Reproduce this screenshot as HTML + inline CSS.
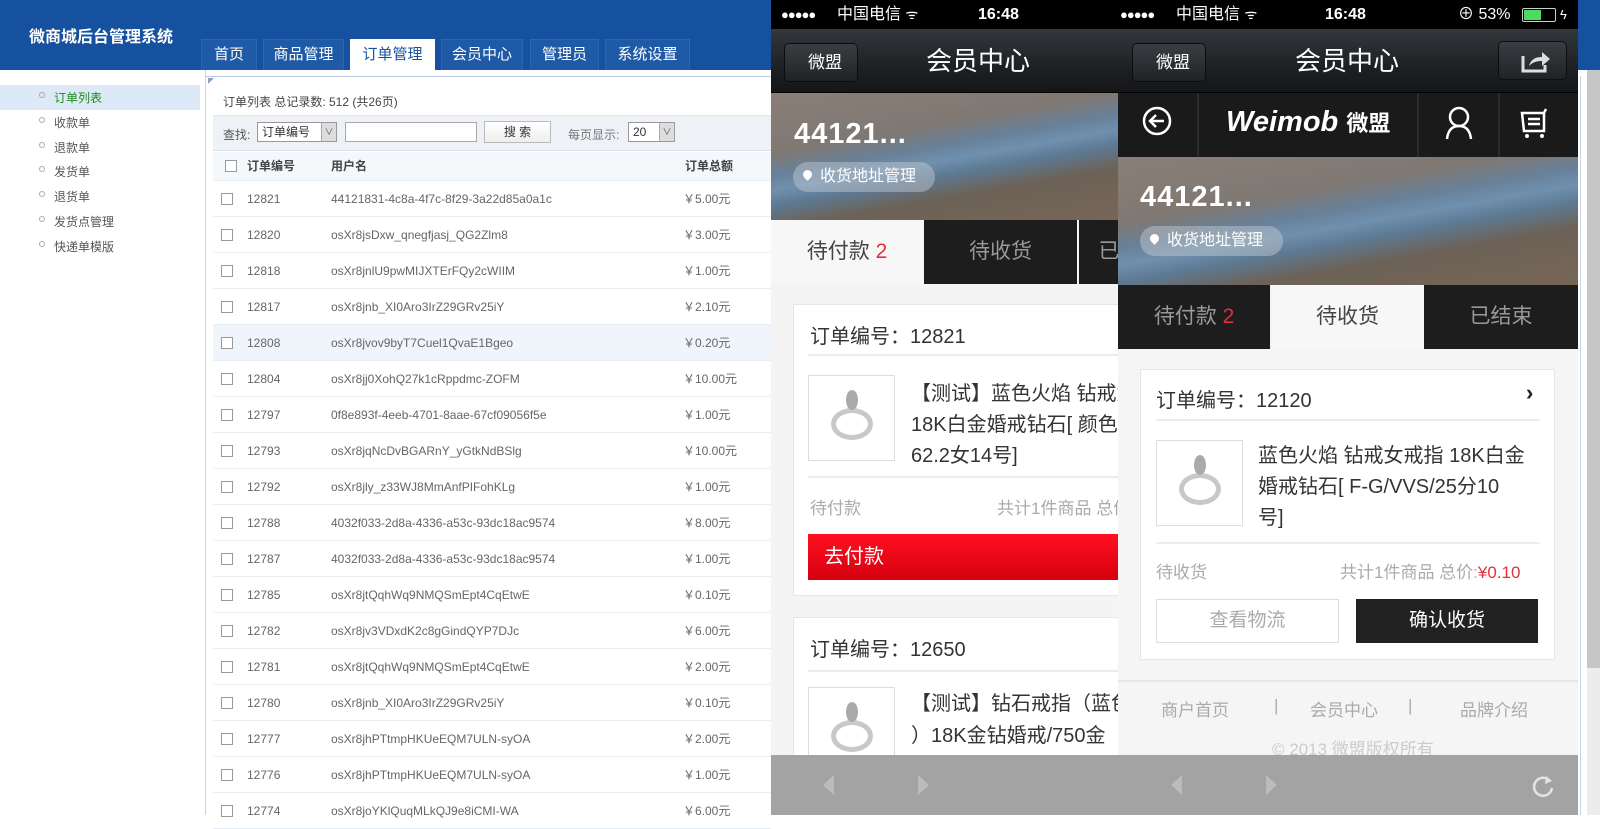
<!DOCTYPE html>
<html><head><meta charset="utf-8"><style>
*{margin:0;padding:0;box-sizing:border-box}
body{width:1600px;height:815px;overflow:hidden;position:relative;background:#fff;font-family:"Liberation Sans","Noto Sans CJK SC",sans-serif;color:#333}
.a{position:absolute;white-space:nowrap}
.tab{position:absolute;top:39px;height:31px;background:#1f5aa6;border:1px solid #2c66b3;border-bottom:none;color:#fff;font-size:15px;line-height:30px;text-align:center}
.side{position:absolute;left:54px;font-size:12px;color:#555}
.dot{position:absolute;left:39px;width:6px;height:6px;border:1px solid #aaa;border-radius:50%}
.row{position:absolute;left:213px;width:558px;height:36px;border-bottom:1px solid #e6edf5;font-size:12px;color:#666;line-height:36px}
.cb{position:absolute;left:8px;top:12px;width:12px;height:12px;border:1px solid #999;background:#fff}
.sb{position:absolute;top:0;height:29px;background:#000;color:#fff;font-size:16px;line-height:29px}
.nav{position:absolute;top:29px;height:64px;background:linear-gradient(#33383c,#1e2124 60%,#141618);border-bottom:1px solid #000}
.back{position:absolute;top:14px;height:39px;width:74px;border:1px solid #0c0d0e;border-radius:5px;background:linear-gradient(#3a3e42,#202326);color:#fff;font-size:17px;line-height:37px;text-align:center;padding-left:8px}
.ttl{position:absolute;top:0;line-height:64px;color:#fff;font-size:26px}
.photo{position:absolute;background:linear-gradient(170deg,#8a7f78 0%,#7f7872 32%,#68819a 44%,#6f90ae 52%,#5d7a93 60%,#6c6257 72%,#776656 100%)}
.nick{position:absolute;color:#fff;font-size:29px;font-weight:bold;letter-spacing:1px}
.pill{position:absolute;height:30px;border-radius:15px;background:rgba(200,205,210,.45);color:#fff;font-size:16px;line-height:30px;padding-left:27px}
.pill:before{content:"";position:absolute;left:10px;top:8px;width:9px;height:9px;border-radius:50% 50% 50% 0;transform:rotate(-45deg);background:#fff}
.ptab{position:absolute;height:64px;font-size:21px;line-height:64px;text-align:center}
.dk{background:#1d1d1d;color:#999}
.card{position:absolute;background:#fff;border:1px solid #e6e6e6}
.big{position:absolute;font-size:20px;color:#333;white-space:nowrap}
.line{position:absolute;height:2px;background:#ececec}
.img{position:absolute;width:87px;height:86px;border:1px solid #ddd;background:#fff}
.ring{position:absolute;left:22px;top:32px;width:42px;height:32px;border:5px solid #c8c8c8;border-radius:50%}
.gem{position:absolute;left:37px;top:14px;width:12px;height:20px;background:#aaa;border-radius:50%}
.gray{position:absolute;font-size:17px;color:#aaa;white-space:nowrap}
</style></head><body>
<div class="a" style="left:0;top:0;width:1600px;height:70px;background:#15519f"></div>
<div class="a" style="left:29px;top:23px;color:#fff;font-size:16px;font-weight:bold">微商城后台管理系统</div>
<div class="tab" style="left:201px;width:56px">首页</div>
<div class="tab" style="left:263px;width:81px">商品管理</div>
<div class="tab" style="left:350px;width:85px;background:#fff;color:#15519f;border-color:#fff">订单管理</div>
<div class="tab" style="left:441px;width:82px">会员中心</div>
<div class="tab" style="left:530px;width:69px">管理员</div>
<div class="tab" style="left:605px;width:85px">系统设置</div>
<div class="a" style="left:0;top:85px;width:200px;height:25px;background:#dde9f7"></div>
<div class="a" style="left:205px;top:70px;width:1px;height:745px;background:#c8d3e0"></div>
<div class="dot" style="top:92px"></div><div class="side" style="top:89px;color:#1f8a1f">订单列表</div>
<div class="dot" style="top:117px"></div><div class="side" style="top:114px">收款单</div>
<div class="dot" style="top:142px"></div><div class="side" style="top:139px">退款单</div>
<div class="dot" style="top:166px"></div><div class="side" style="top:163px">发货单</div>
<div class="dot" style="top:191px"></div><div class="side" style="top:188px">退货单</div>
<div class="dot" style="top:216px"></div><div class="side" style="top:213px">发货点管理</div>
<div class="dot" style="top:241px"></div><div class="side" style="top:238px">快递单模版</div>
<div class="a" style="left:206px;top:76px;width:600px;height:1px;background:#b9c7d8"></div>
<div class="a" style="left:208px;top:78px;border-left:6px solid #8aa2c0;border-bottom:6px solid transparent"></div>
<div class="a" style="left:223px;top:93px;font-size:12px;color:#444">订单列表 总记录数: 512 (共26页)</div>
<div class="a" style="left:213px;top:115px;width:558px;height:36px;background:#eef2f7;border-top:1px solid #dde4ee;border-bottom:1px solid #dde4ee"></div>
<div class="a" style="left:223px;top:126px;font-size:12px;color:#555">查找:</div>
<div class="a" style="left:257px;top:122px;width:80px;height:20px;border:1px solid #999;background:#fff;font-size:12px;line-height:18px;padding-left:4px">订单编号</div>
<div class="a" style="left:321px;top:123px;width:15px;height:18px;background:#ddd;border-left:1px solid #aaa;font-size:9px;text-align:center;line-height:18px;color:#555">∨</div>
<div class="a" style="left:345px;top:122px;width:132px;height:20px;border:1px solid #aaa;background:#fff"></div>
<div class="a" style="left:484px;top:121px;width:67px;height:22px;border:1px solid #bbb;background:linear-gradient(#fff,#eee);font-size:12px;text-align:center;line-height:20px">搜 索</div>
<div class="a" style="left:568px;top:126px;font-size:12px;color:#777">每页显示:</div>
<div class="a" style="left:628px;top:122px;width:47px;height:20px;border:1px solid #999;background:#fff;font-size:12px;line-height:18px;padding-left:4px">20</div>
<div class="a" style="left:659px;top:123px;width:15px;height:18px;background:#ddd;border-left:1px solid #aaa;font-size:9px;text-align:center;line-height:18px;color:#555">∨</div>
<div class="row" style="top:152px;height:29px;line-height:29px;font-weight:bold;color:#444;background:#f5f8fb"><div class="cb" style="top:8px;left:12px"></div><span class="a" style="left:34px">订单编号</span><span class="a" style="left:118px">用户名</span><span class="a" style="left:472px">订单总额</span></div>
<div id="rows"></div>
<script>
var d=[["12821","44121831-4c8a-4f7c-8f29-3a22d85a0a1c","5.00"],["12820","osXr8jsDxw_qnegfjasj_QG2Zlm8","3.00"],["12818","osXr8jnlU9pwMIJXTErFQy2cWIIM","1.00"],["12817","osXr8jnb_XI0Aro3IrZ29GRv25iY","2.10"],["12808","osXr8jvov9byT7Cuel1QvaE1Bgeo","0.20"],["12804","osXr8jj0XohQ27k1cRppdmc-ZOFM","10.00"],["12797","0f8e893f-4eeb-4701-8aae-67cf09056f5e","1.00"],["12793","osXr8jqNcDvBGARnY_yGtkNdBSlg","10.00"],["12792","osXr8jly_z33WJ8MmAnfPIFohKLg","1.00"],["12788","4032f033-2d8a-4336-a53c-93dc18ac9574","8.00"],["12787","4032f033-2d8a-4336-a53c-93dc18ac9574","1.00"],["12785","osXr8jtQqhWq9NMQSmEpt4CqEtwE","0.10"],["12782","osXr8jv3VDxdK2c8gGindQYP7DJc","6.00"],["12781","osXr8jtQqhWq9NMQSmEpt4CqEtwE","2.00"],["12780","osXr8jnb_XI0Aro3IrZ29GRv25iY","0.10"],["12777","osXr8jhPTtmpHKUeEQM7ULN-syOA","2.00"],["12776","osXr8jhPTtmpHKUeEQM7ULN-syOA","1.00"],["12774","osXr8joYKlQuqMLkQJ9e8iCMI-WA","6.00"]];
var h="";for(var i=0;i<d.length;i++){h+='<div class="row" style="top:'+(181+36*i)+'px;'+(i==4?'background:#f0f5fb':'')+'"><div class="cb"></div><span class="a" style="left:34px">'+d[i][0]+'</span><span class="a" style="left:118px">'+d[i][1]+'</span><span class="a" style="left:470px">￥'+d[i][2]+'元</span></div>'}
document.getElementById("rows").innerHTML=h;
</script>
<div class="a" style="left:1580px;top:76px;width:1px;height:739px;background:#c8d3e0"></div>
<div class="a" style="left:1587px;top:70px;width:13px;height:598px;background:#c6c6c6"></div>
<div class="a" style="left:1587px;top:668px;width:13px;height:147px;background:#ececec"></div>

<div class="a" style="left:771px;top:0;width:347px;height:815px;background:#f4f4f4;overflow:hidden">
 <div class="sb" style="left:0;width:347px"><span class="a" style="left:10px;font-size:13px;letter-spacing:-1px">●●●●●</span><span class="a" style="left:66px">中国电信 <span style="font-size:14px">ᯤ</span></span><span class="a" style="left:207px;font-weight:bold">16:48</span></div>
 <div class="nav" style="left:0;width:347px"><div class="back" style="left:13px">微盟</div><div class="ttl" style="left:155px">会员中心</div></div>
 <div class="photo" style="left:0;top:93px;width:347px;height:127px"></div>
 <div class="nick" style="left:23px;top:118px">44121...</div>
 <div class="pill" style="left:22px;top:162px;width:142px">收货地址管理</div>
 <div class="ptab" style="left:0;top:220px;width:152px;background:#f7f7f7;color:#444">待付款 <span style="color:#e0303a">2</span></div>
 <div class="ptab dk" style="left:153px;top:220px;width:153px">待收货</div>
 <div class="ptab dk" style="left:308px;top:220px;width:60px">已</div>
 <div class="card" style="left:22px;top:304px;width:340px;height:292px"></div>
 <div class="big" style="left:39px;top:320px">订单编号：12821</div>
 <div class="line" style="left:37px;top:354px;width:320px"></div>
 <div class="img" style="left:37px;top:375px"><div class="ring"></div><div class="gem"></div></div>
 <div class="big" style="left:140px;top:379px;line-height:31px">【测试】蓝色火焰 钻戒女戒指<br>18K白金婚戒钻石[ 颜色<br>62.2女14号]</div>
 <div class="line" style="left:37px;top:476px;width:320px"></div>
 <div class="gray" style="left:39px;top:494px">待付款</div>
 <div class="gray" style="left:226px;top:494px">共计1件商品 总价</div>
 <div class="a" style="left:37px;top:534px;width:320px;height:46px;background:linear-gradient(#ff1020,#d50010);color:#fff;font-size:20px;line-height:46px;padding-left:16px">去付款</div>
 <div class="card" style="left:22px;top:617px;width:340px;height:200px"></div>
 <div class="big" style="left:39px;top:633px">订单编号：12650</div>
 <div class="line" style="left:37px;top:670px;width:320px"></div>
 <div class="img" style="left:37px;top:687px"><div class="ring"></div><div class="gem"></div></div>
 <div class="big" style="left:140px;top:688px;line-height:32px">【测试】钻石戒指（蓝色<br>）18K金钻婚戒/750金</div>
 <div class="a" style="left:0;top:755px;width:347px;height:60px;background:#a3a3a3"></div>
 <div class="a" style="left:52px;top:775px;border-right:11px solid #bcbcbc;border-top:10px solid transparent;border-bottom:10px solid transparent"></div>
 <div class="a" style="left:147px;top:775px;border-left:11px solid #bcbcbc;border-top:10px solid transparent;border-bottom:10px solid transparent"></div>
</div>

<div class="a" style="left:1118px;top:0;width:460px;height:815px;background:#f5f5f5;overflow:hidden">
 <div class="sb" style="left:0;width:460px"><span class="a" style="left:2px;font-size:13px;letter-spacing:-1px">●●●●●</span><span class="a" style="left:58px">中国电信 <span style="font-size:14px">ᯤ</span></span><span class="a" style="left:207px;font-weight:bold">16:48</span><span class="a" style="left:340px">⊕ 53%</span><span class="a" style="left:404px;top:8px;width:34px;height:14px;border:1px solid #ccc;border-radius:2px"><span class="a" style="left:1px;top:1px;width:17px;height:10px;background:#4cd964"></span></span><span class="a" style="left:442px;font-size:13px">ϟ</span></div>
 <div class="nav" style="left:0;width:460px"><div class="back" style="left:14px">微盟</div><div class="ttl" style="left:177px">会员中心</div>
  <div class="a" style="left:380px;top:12px;width:69px;height:39px;border:1px solid #0c0d0e;border-radius:5px;background:linear-gradient(#3a3e42,#202326)"><svg width="69" height="39"><path d="M24 14v15h22v-6" fill="none" stroke="#ddd" stroke-width="3"/><path d="M30 24c2-7 7-9 13-9v-5l8 7-8 7v-5c-5 0-9 1-13 5z" fill="#ddd"/></svg></div></div>
 <div class="a" style="left:0;top:93px;width:460px;height:64px;background:#1a1a1a"></div>
 <div class="a" style="left:79px;top:93px;width:2px;height:64px;background:#2c2c2c"></div>
 <div class="a" style="left:299px;top:93px;width:2px;height:64px;background:#2c2c2c"></div>
 <div class="a" style="left:380px;top:93px;width:2px;height:64px;background:#2c2c2c"></div>
 <svg class="a" style="left:22px;top:105px" width="36" height="36"><circle cx="17" cy="16" r="13" fill="none" stroke="#fff" stroke-width="2.5"/><path d="M24 16H11M16 10l-6 6 6 6" fill="none" stroke="#fff" stroke-width="2.5"/></svg>
 <div class="a" style="left:108px;top:106px;color:#fff;font-size:29px;font-weight:bold;font-style:italic">Weimob <span style="font-size:22px;font-style:normal">微盟</span></div>
 <svg class="a" style="left:324px;top:105px" width="34" height="36"><circle cx="17" cy="12" r="9" fill="none" stroke="#fff" stroke-width="2.5"/><path d="M5 34c1-9 5-13 12-13s11 4 12 13" fill="none" stroke="#fff" stroke-width="2.5"/></svg>
 <svg class="a" style="left:400px;top:105px" width="36" height="36"><path d="M4 8h22v18H6zM10 14h12M10 19h12M28 4l-2 4v18" fill="none" stroke="#fff" stroke-width="2.5"/><circle cx="9" cy="31" r="2" fill="#fff"/><circle cx="24" cy="31" r="2" fill="#fff"/></svg>
 <div class="photo" style="left:0;top:157px;width:460px;height:128px"></div>
 <div class="nick" style="left:22px;top:181px">44121...</div>
 <div class="pill" style="left:22px;top:226px;width:143px">收货地址管理</div>
 <div class="ptab dk" style="left:0;top:285px;width:152px">待付款 <span style="color:#e0303a">2</span></div>
 <div class="ptab" style="left:154px;top:285px;width:151px;background:#f7f7f7;color:#444">待收货</div>
 <div class="ptab dk" style="left:306px;top:285px;width:154px">已结束</div>
 <div class="card" style="left:22px;top:369px;width:415px;height:291px"></div>
 <div class="big" style="left:38px;top:384px">订单编号：12120</div>
 <div class="a" style="left:408px;top:380px;font-size:22px;font-weight:bold;color:#222">›</div>
 <div class="line" style="left:38px;top:419px;width:384px"></div>
 <div class="img" style="left:38px;top:440px"><div class="ring"></div><div class="gem"></div></div>
 <div class="big" style="left:140px;top:441px;line-height:31px">蓝色火焰 钻戒女戒指 18K白金<br>婚戒钻石[ F-G/VVS/25分10<br>号]</div>
 <div class="line" style="left:38px;top:542px;width:384px"></div>
 <div class="gray" style="left:38px;top:558px">待收货</div>
 <div class="gray" style="left:222px;top:558px">共计1件商品 总价:<span style="color:#e0303a">¥0.10</span></div>
 <div class="a" style="left:38px;top:599px;width:183px;height:44px;border:1px solid #ddd;background:#fff;color:#aaa;font-size:19px;line-height:42px;text-align:center">查看物流</div>
 <div class="a" style="left:238px;top:599px;width:182px;height:44px;background:#222;color:#fff;font-size:19px;line-height:44px;text-align:center">确认收货</div>
 <div class="a" style="left:0;top:680px;width:460px;height:2px;background:#e6e6e6"></div>
 <div class="gray" style="left:43px;top:696px">商户首页</div>
 <div class="gray" style="left:156px;top:696px">|</div>
 <div class="gray" style="left:192px;top:696px">会员中心</div>
 <div class="gray" style="left:290px;top:696px">|</div>
 <div class="gray" style="left:342px;top:696px">品牌介绍</div>
 <div class="gray" style="left:154px;top:735px;color:#ccc">© 2013 微盟版权所有</div>
 <div class="a" style="left:0;top:755px;width:460px;height:60px;background:#a3a3a3"></div>
 <div class="a" style="left:53px;top:775px;border-right:11px solid #bcbcbc;border-top:10px solid transparent;border-bottom:10px solid transparent"></div>
 <div class="a" style="left:148px;top:775px;border-left:11px solid #bcbcbc;border-top:10px solid transparent;border-bottom:10px solid transparent"></div>
 <svg class="a" style="left:414px;top:773px" width="24" height="26"><path d="M18 8a9 9 0 1 0 2 7" fill="none" stroke="#e4e4e4" stroke-width="2.5"/><path d="M14 3l6 5-7 3z" fill="#e4e4e4"/></svg>
</div>
</body></html>
